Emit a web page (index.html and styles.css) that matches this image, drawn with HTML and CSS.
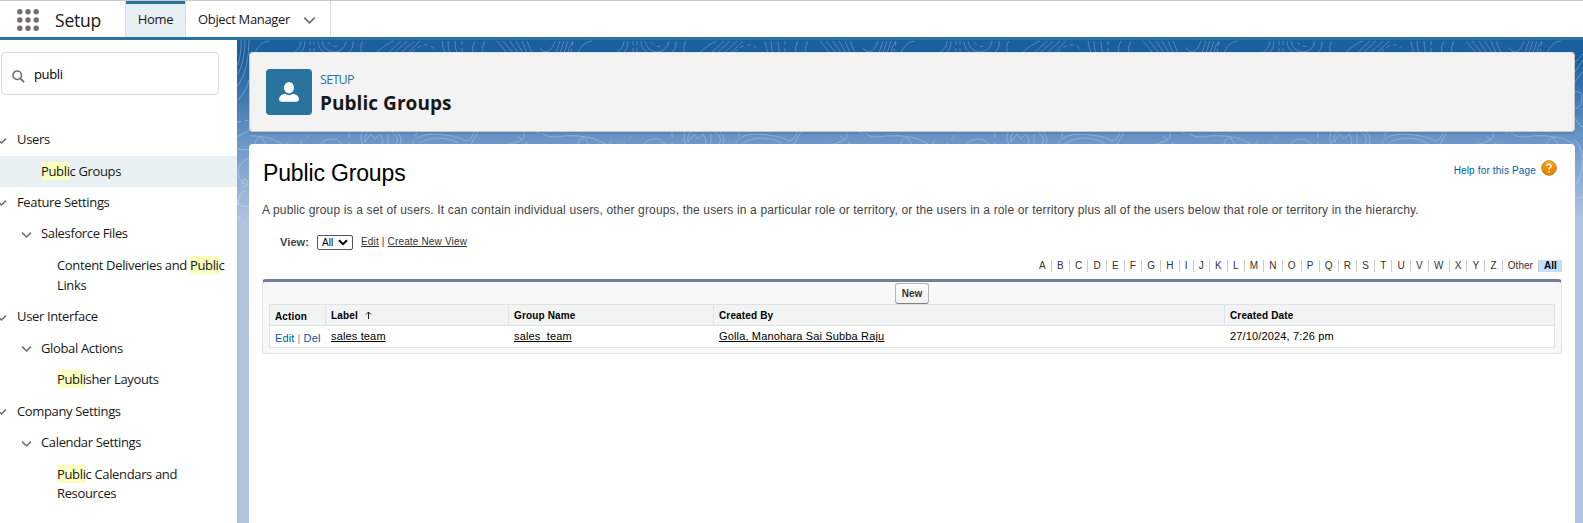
FILE: index.html
```
<!DOCTYPE html>
<html lang="en">
<head>
<meta charset="utf-8">
<title>Public Groups | Setup</title>
<link rel="stylesheet" href="styles.css">
</head>
<body>
<svg class="defs" width="0" height="0" aria-hidden="true">
  <symbol id="chev" viewBox="0 0 12 8"><path d="M1.2 1.4 6 6.2l4.8-4.8" fill="none" stroke="currentColor" stroke-width="1.6"/></symbol>
</svg>
<header class="topbar">
  <svg class="waffle" width="22" height="22" viewBox="0 0 22 22" fill="#706e6b">
    <circle cx="2.8" cy="2.8" r="2.7"/><circle cx="11" cy="2.8" r="2.7"/><circle cx="19.2" cy="2.8" r="2.7"/>
    <circle cx="2.8" cy="11" r="2.7"/><circle cx="11" cy="11" r="2.7"/><circle cx="19.2" cy="11" r="2.7"/>
    <circle cx="2.8" cy="19.2" r="2.7"/><circle cx="11" cy="19.2" r="2.7"/><circle cx="19.2" cy="19.2" r="2.7"/>
  </svg>
  <span class="app-name">Setup</span>
  <nav class="tabs">
    <a class="tab tab-active"><span>Home</span></a>
    <a class="tab tab-object"><span>Object Manager</span><svg class="tab-chev" width="13" height="9"><use href="#chev"/></svg></a>
  </nav>
</header>
<div class="body">
  <aside class="sidebar">
    <div class="search">
      <svg width="13" height="13" viewBox="0 0 14 14" fill="none" stroke="#706e6b" stroke-width="1.7"><circle cx="5.6" cy="5.6" r="4.6"/><path d="M9 9l4 4" stroke-width="2"/></svg>
      <span>publi</span>
    </div>
    <ul class="tree">
      <li class="lvl1"><svg class="chev"><use href="#chev"/></svg>Users</li>
      <li class="lvl2 leaf selected"><span><mark>Publi</mark>c Groups</span></li>
      <li class="lvl1"><svg class="chev"><use href="#chev"/></svg>Feature Settings</li>
      <li class="lvl2"><svg class="chev"><use href="#chev"/></svg>Salesforce Files</li>
      <li class="lvl3 two"><span>Content Deliveries and <mark>Publi</mark>c<br>Links</span></li>
      <li class="lvl1"><svg class="chev"><use href="#chev"/></svg>User Interface</li>
      <li class="lvl2"><svg class="chev"><use href="#chev"/></svg>Global Actions</li>
      <li class="lvl3"><span><mark>Publi</mark>sher Layouts</span></li>
      <li class="lvl1"><svg class="chev"><use href="#chev"/></svg>Company Settings</li>
      <li class="lvl2"><svg class="chev"><use href="#chev"/></svg>Calendar Settings</li>
      <li class="lvl3 two"><span><mark>Publi</mark>c Calendars and<br>Resources</span></li>
    </ul>
  </aside>
  <main class="workspace">
    <svg class="topo" width="1346" height="483" aria-hidden="true">
      <defs>
        <pattern id="contours" x="303" y="0" width="323" height="200" patternUnits="userSpaceOnUse">
          <g fill="none" stroke="#fff" stroke-opacity=".25" stroke-width="1">
            <path d="M-3 1Q0 12 7 12Q12 10 15 1M20 1L16 13M24 1L20 13M28 1L24 13M33 1Q29 5 28 13M52 1Q42 2 38 13"/>
            <path d="M84 1Q84 8 76 13M88 1Q88 9 83 13M101 1Q101 9 108 13M105 1Q107 11 116 12Q127 12 129 1M136 1Q137 9 131 13M146 1Q142 7 145 13"/>
            <path d="M177 1Q170 3 159 13M184 1L171 13M190 1L177 13M197 1L184 13M203 1L191 13"/>
            <path d="M225 1Q226 9 228 13M231 1Q231 9 233 13M238 1Q238 9 240 13M258 1Q254 7 256 13M268 1Q264 7 266 13"/>
            <path d="M280 1L290 13M286 1L296 13M293 1L301 13M299 1L306 13M305 1L310 13M310 1L315 13"/>
            <path stroke-dasharray="4 3" d="M33 2L31 13M97 1V13M93 1V13M111 2Q116 9 123 5M195 12Q205 2 214 6L219 11M245 1V13"/>
            <path d="M2 93Q8 98 16 97Q30 95 38 96Q51 97 57 100L65 104M38 104Q39 97 45 98L49 105M103 106Q106 98 119 99L128 106M67 106L72 101M171 94V106"/>
            <path d="M145 92Q142 100 147 106M151 92Q147 95 148 102L154 94 158 99 163 94 166 100 165 106M175 92Q184 98 178 106M180 92Q187 99 182 106"/>
            <path d="M200 106Q207 98 222 98Q239 99 244 106M198 99Q209 92 228 95Q244 97 249 101Q255 100 257 92M253 106L261 92M278 106Q299 105 307 98L307 92"/>
            <path stroke-dasharray="6 4" d="M81 106L96 92M195 106L200 92M132 92V106M300 96L313 106M323 94L313 89"/>
          </g>
        </pattern>
      </defs>
      <rect x="13" width="1325" height="105" fill="url(#contours)"/>
      <g fill="none" stroke="#fff" stroke-opacity=".28">
        <path d="M1 25Q5 10 4 0M1 34Q8 20 8 0M1 46Q12 29 12 0M1 60Q10 50 12 40M0 97Q5 94 13 90M0 109L13 110M13 117Q1 123 1 132T10 145M10 151Q1 150 1 165M8 139a2.4 4 0 1 0 .1 0M0 163Q6 168 13 166"/>
        <path stroke-dasharray="4 4" d="M0 82L13 80M1 176L13 190"/>
        <path d="M1338 22L1346 14M1338 32L1346 20M1338 42L1346 31M1338 52Q1345 50 1345 58T1338 69M1338 78Q1342 86 1346 87M1338 100Q1345 107 1346 120M1338 145Q1346 137 1345 120M1338 158L1346 157"/>
      </g>
    </svg>
    <section class="page-head">
      <div class="head-icon">
        <svg width="20" height="20" viewBox="0 0 20 20" fill="#fff"><ellipse cx="10" cy="5.7" rx="5" ry="5.7"/><path d="M6 11.7Q10 14.6 14 11.7Q20 13 20 17.3Q20 19.7 17.5 19.7H2.5Q0 19.7 0 17.3Q0 13 6 11.7Z"/></svg>
      </div>
      <div class="head-text"><p>SETUP</p><h1>Public Groups</h1></div>
    </section>
    <section class="content">
      <div class="title-row">
        <h2>Public Groups</h2>
        <a class="help"><span>Help for this Page</span>
          <svg width="16" height="16" viewBox="0 0 16 16"><defs><linearGradient id="orange" x1="0" y1="0" x2="0" y2="1"><stop offset="0" stop-color="#f9b233"/><stop offset=".5" stop-color="#f08c00"/><stop offset="1" stop-color="#e98300"/></linearGradient></defs><circle cx="8" cy="8" r="7.3" fill="url(#orange)" stroke="#b9791d" stroke-width=".9"/><path d="M5.9 6.1Q5.9 4.2 8 4.2t2.1 1.9Q10.1 7.2 8.9 7.9Q8 8.5 8 9.5" fill="none" stroke="#fff" stroke-width="1.5"/><circle cx="8" cy="11.6" r=".95" fill="#fff"/></svg>
        </a>
      </div>
      <p class="desc">A public group is a set of users. It can contain individual users, other groups, the users in a particular role or territory, or the users in a role or territory plus all of the users below that role or territory in the hierarchy.</p>
      <div class="view-row">
        <b>View:</b>
        <span class="select">All<svg width="10" height="7" viewBox="0 0 10 7"><path d="M1 1.2l4 4 4-4" fill="none" stroke="#000" stroke-width="2"/></svg></span>
        <span class="view-links"><a>Edit</a> | <a>Create New View</a></span>
      </div>
      <div class="rolodex">
        <a>A</a><a>B</a><a>C</a><a>D</a><a>E</a><a>F</a><a>G</a><a>H</a><a>I</a><a>J</a><a>K</a><a>L</a><a>M</a><a>N</a><a>O</a><a>P</a><a>Q</a><a>R</a><a>S</a><a>T</a><a>U</a><a>V</a><a>W</a><a>X</a><a>Y</a><a>Z</a><a>Other</a><a class="current">All</a>
      </div>
      <div class="list">
        <div class="list-tools"><button class="btn">New</button></div>
        <div class="grid">
          <div class="cell th action">Action</div>
          <div class="cell th">Label<svg class="sort" width="7" height="8" viewBox="0 0 7 8"><path d="M3.5 8V1M1 3.5L3.5 1 6 3.5" fill="none" stroke="#222" stroke-width="1"/></svg></div>
          <div class="cell th">Group Name</div>
          <div class="cell th">Created By</div>
          <div class="cell th">Created Date</div>
          <div class="cell action links"><a>Edit</a><i>|</i><a>Del</a></div>
          <div class="cell"><a>sales team</a></div>
          <div class="cell"><a>sales_team</a></div>
          <div class="cell"><a>Golla, Manohara Sai Subba Raju</a></div>
          <div class="cell">27/10/2024, 7:26 pm</div>
        </div>
      </div>
    </section>
  </main>
</div>
</body>
</html>
```
FILE: styles.css
```
* { box-sizing: border-box; }
body {
  margin: 0;
  height: 523px;
  overflow: hidden;
  display: flex;
  flex-direction: column;
  background: #fff;
  color: #181818;
  font-family: "Open Sans", "Noto Sans", sans-serif;
  font-size: 13px;
}
h1, h2, p, ul { margin: 0; padding: 0; }
.defs { display: none; }

.topbar {
  height: 40px;
  flex: none;
  display: flex;
  border-top: 1px solid #c9c9c9;
  border-bottom: 3px solid #2a739e;
}
.waffle { margin: 8px 0 0 17px; flex: none; }
.app-name { width: 86px; padding-left: 16px; font-size: 17.5px; line-height: 38px; letter-spacing: -.2px; }
.tabs { display: flex; line-height: 37px; letter-spacing: -.33px; }
.tab { display: flex; border-right: 1px solid #dddbda; }
.tab-active { width: 61px; justify-content: center; background: #e8f0f3; border-left: 1px solid #dddbda; box-shadow: inset 0 3px #2a739e; }
.tab-object { width: 145px; padding-left: 12px; }
.tab-chev { margin: 15px 0 0 13px; color: #706e6b; }

.body { flex: 1; display: flex; min-height: 0; }
.sidebar { width: 237px; flex: none; padding-top: 12px; letter-spacing: -.35px; }
.search {
  width: 218px;
  height: 43px;
  margin-left: 1px;
  padding-left: 9.5px;
  display: flex;
  align-items: center;
  gap: 9.5px;
  border: 1px solid #dddbda;
  border-radius: 4px;
  color: #000;
}
.search svg { margin-top: 5px; }
.tree { list-style: none; margin-top: 29px; }
.tree li { height: 31.5px; display: flex; align-items: center; line-height: 19px; white-space: nowrap; }
.tree .selected { height: 31.2px; }
.tree .two { height: 51.3px; align-items: flex-start; padding-top: 6.6px; line-height: 19.4px; }
.chev { width: 11px; height: 8px; flex: none; color: #706e6b; margin-top: 2px; }
.lvl1 .chev { margin-left: -4px; margin-right: 10px; }
.lvl2 .chev { margin-left: 20.5px; margin-right: 9.5px; }
.leaf { padding-left: 41px; }
.lvl3 { padding-left: 57px; }
.selected { background: #e8f0f3; }
mark { background: #faffbd; color: inherit; }

.workspace {
  position: relative;
  flex: 1;
  min-width: 0;
  display: flex;
  flex-direction: column;
  padding: 12px 8px 0 12px;
  background: linear-gradient(#1b5f9e 0, #1b5f9e 18px, #6f9aca 106px, #b0c4df 180px);
}
.topo { position: absolute; left: 0; top: 0; }
.page-head {
  position: relative;
  height: 80px;
  flex: none;
  display: flex;
  padding: 16px;
  background: #f3f3f3;
  border: 1px solid #c9c9c9;
  border-top-color: #dce3ec;
  border-radius: 4px;
  box-shadow: 0 2px 2px rgba(0, 0, 0, .1);
}
.head-icon { width: 46px; height: 46px; border-radius: 4px; background: #2a739e; display: flex; align-items: center; justify-content: center; }
.head-text { margin-left: 8px; }
.head-text p { margin-top: 2px; color: #2a739e; font-size: 12.5px; line-height: 18px; letter-spacing: -.7px; }
.head-text h1 { font-size: 19px; line-height: 29px; letter-spacing: .05px; white-space: nowrap; }

.content {
  position: relative;
  flex: 1;
  margin-top: 12px;
  padding: 0 13px;
  background: #fff;
  border-radius: 4px 4px 0 0;
  font-family: "Liberation Sans", Arial, sans-serif;
  color: #000;
}
.title-row { height: 56px; display: flex; justify-content: space-between; }
.title-row h2 { font-size: 23px; font-weight: 400; line-height: 29px; margin: 15px 0 0 1px; letter-spacing: -.15px; }
.help { display: flex; gap: 5px; margin: 16px 5px 0 0; color: #015ba7; font-size: 10px; line-height: 21px; letter-spacing: .16px; }
.desc { color: #444; font-size: 12px; line-height: 20px; white-space: nowrap; letter-spacing: .154px; }
.view-row { height: 40px; display: flex; padding: 13px 0 0 18px; color: #4a4a56; font-size: 11px; line-height: 18px; }
.view-row b { color: #444; letter-spacing: .1px; }
.select {
  width: 36px;
  height: 15px;
  margin: 2px 8px 0 8px;
  padding: 0 4px;
  display: flex;
  justify-content: space-between;
  align-items: center;
  border: 1px solid #555;
  border-radius: 2px;
  color: #000;
  font-size: 10px;
}
.view-links { font-size: 10px; color: #333; letter-spacing: .16px; }
.view-links a, .grid a { text-decoration: underline; }
.rolodex { height: 19px; display: flex; justify-content: flex-end; font-size: 10px; line-height: 12px; color: #333; }
.rolodex a { height: 12px; padding: 0 5.13px; border-right: 1px solid #ccc; }
.rolodex .current { background: #c2dfff; color: #000; font-weight: 700; border: 0; }

.list { height: 75px; padding: 0 6px; background: #f8f8f8; border: 1px solid #e0e3e5; border-top: 3px solid #747e96; border-radius: 4px; }
.list-tools { height: 22px; display: flex; justify-content: center; padding-top: 1px; }
.btn {
  width: 34px;
  height: 21px;
  padding: 0;
  border: 1px solid #b5b5b5;
  border-bottom-color: #7f7f7f;
  border-radius: 3px;
  background: linear-gradient(#fff, #f0f0f0);
  color: #333;
  font: 700 10px "Liberation Sans", Arial, sans-serif;
}
.grid { display: grid; grid-template-columns: 55px 183px 205px 511px 1fr; grid-template-rows: 21px 21px; border: 1px solid #e0e3e5; background: #fff; font-size: 11px; letter-spacing: .15px; }
.cell { padding-left: 6px; line-height: 20px; white-space: nowrap; }
.th { padding-left: 5px; background: #f2f3f3; font-size: 10px; font-weight: 700; line-height: 21px; border-bottom: 1px solid #e0e3e5; border-left: 1px solid #e0e3e5; }
.action { padding-left: 5px; border-left: 0; }
.th.action { line-height: 23px; }
.sort { margin-left: 7px; }
.links { color: #015ba7; line-height: 24px; }
.grid .links a { text-decoration: none; }
.links i { color: #999; font-style: normal; margin: 0 3px; }
```
